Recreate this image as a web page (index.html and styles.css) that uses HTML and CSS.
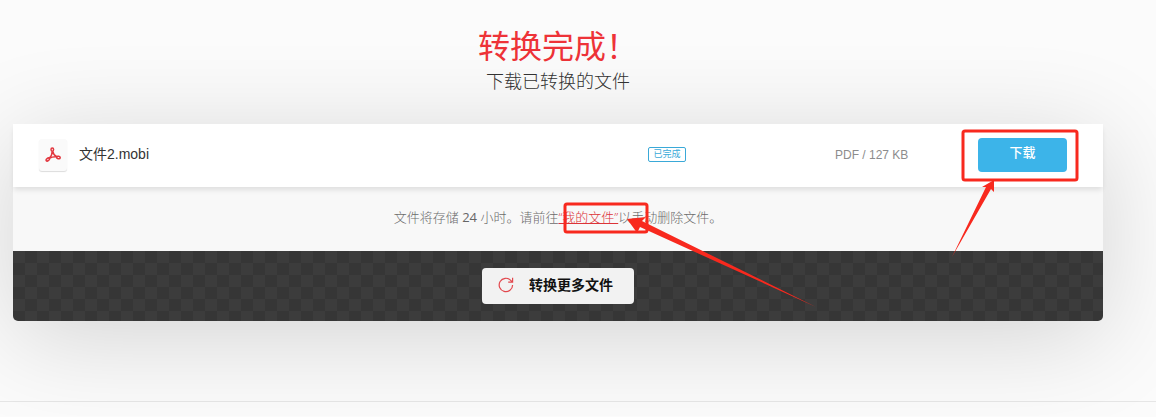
FILE: index.html
```html
<!DOCTYPE html>
<html lang="zh-CN">
<head>
<meta charset="utf-8">
<title>转换完成</title>
<link rel="stylesheet" href="styles.css">
</head>
<body>
<main class="page">
  <header class="heading">
    <h1 class="title">转换完成！</h1>
    <p class="subtitle">下载已转换的文件</p>
  </header>
  <section class="card">
    <div class="file-row">
      <div class="file">
        <span class="file-icon">
          <svg width="16" height="16" viewBox="0 0 16 16" fill="none" stroke="#e2373f" stroke-width="1.5" stroke-linejoin="round" aria-hidden="true">
            <ellipse cx="7.3" cy="2.6" rx="1.3" ry="1.7"/>
            <path d="M7.2 4.3C7.4 6.8 6 9.6 3.9 11.7M7.8 4.3C8.1 6.5 9.6 8.7 12 9.9M4.2 11.3C6.3 10.2 9.2 9.5 12 9.8"/>
            <ellipse cx="2.8" cy="12.5" rx="1.9" ry="1.2" transform="rotate(-38 2.8 12.5)"/>
            <ellipse cx="13.4" cy="10.5" rx="1.8" ry="1.2" transform="rotate(15 13.4 10.5)"/>
          </svg>
        </span>
        <span class="file-name">文件2.mobi</span>
      </div>
      <div class="state"><span class="badge">已完成</span></div>
      <span class="meta">PDF / 127 KB</span>
      <button class="download" type="button">下载</button>
    </div>
    <p class="notice">文件将存储 <span class="hours">24</span> 小时。请前往<a class="files-link" href="#">“我的文件”</a>以手动删除文件。</p>
    <div class="actions">
      <button class="more" type="button">
        <svg width="16" height="16" viewBox="0 0 16 16" fill="none" stroke="#e2474d" stroke-width="1.2" aria-hidden="true">
          <path d="M14.6 8A6.7 6.7 0 1 1 12.7 3.3L14.6 5.2M14.6 .8V5.2H10.2"/>
        </svg>
        转换更多文件
      </button>
    </div>
    <svg class="mark mark-link" width="256" height="106" viewBox="0 0 256 106" aria-hidden="true">
      <rect x="3" y="3" width="82" height="28" rx="2" fill="none" stroke="#f8291e" stroke-width="3"/>
      <path d="M65 18L84 16L80 20L254 106L78 26L75 32L73 29Z" fill="#f8291e"/>
    </svg>
    <svg class="mark mark-download" width="130" height="130" viewBox="0 0 130 130" aria-hidden="true">
      <rect x="12" y="4" width="114" height="49" rx="2" fill="none" stroke="#f8291e" stroke-width="3"/>
      <path d="M43 53L43 65L40 62L1 130L35 60L31 60Z" fill="#f8291e"/>
    </svg>
  </section>
</main>
<footer class="footer"></footer>
</body>
</html>
```
FILE: styles.css
```css
* {
  box-sizing: border-box;
}

body {
  margin: 0;
  background: #fbfbfb;
  color: #333;
  font-family: "Liberation Sans", "Noto Sans CJK SC", sans-serif;
  overflow-x: hidden;
}

.page {
  padding: 26px 53px 80px 13px;
}

.heading {
  padding-bottom: 28px;
  text-align: center;
}

.title {
  margin: 0;
  color: #ee3338;
  font-size: 32px;
  line-height: 42px;
  font-weight: 400;
}

.subtitle {
  margin: 0;
  color: #333;
  font-size: 18px;
  line-height: 28px;
  font-weight: 300;
}

.card {
  position: relative;
  border-radius: 0 0 5px 5px;
  background: #f8f8f8;
  box-shadow: 0 16px 100px rgba(0, 0, 0, 0.16);
}

.file-row {
  position: relative;
  display: grid;
  grid-template-columns: 1fr 187px 143px 89px;
  align-items: center;
  min-height: 63px;
  padding: 0 36px 2px 26px;
  background: #fff;
  box-shadow: 0 4px 5px -1px rgba(0, 0, 0, 0.1);
}

.file {
  display: flex;
  align-items: center;
  gap: 12px;
}

.file-icon {
  display: grid;
  place-items: center;
  width: 28px;
  height: 32px;
  border-radius: 3px;
  background: #fafafa;
  box-shadow: 0 1px 1px rgba(0, 0, 0, 0.14);
}

.file-name {
  padding-bottom: 2px;
  font-size: 14px;
  line-height: 20px;
}

.state {
  display: flex;
}

.badge {
  width: 38px;
  border: 1px solid #3aa9d8;
  border-radius: 2px;
  color: #3aa9d8;
  font-size: 9px;
  line-height: 13px;
  text-align: center;
}

.meta {
  color: #8c8c8c;
  font-size: 12px;
  line-height: 16px;
}

.download {
  height: 34px;
  padding: 0 0 4px;
  border: 0;
  border-radius: 4px;
  background: #3cb4e9;
  color: #fff;
  font: 500 13px/20px "Liberation Sans", "Noto Sans CJK SC", sans-serif;
}

.notice {
  margin: 0;
  padding: 20px 16px 24px;
  color: #6c6c6c;
  font-family: "Open Sans", "Noto Sans CJK SC", sans-serif;
  font-size: 13px;
  line-height: 20px;
  font-weight: 300;
  text-align: center;
}

.hours {
  color: #666;
  font-weight: 400;
}

.files-link {
  color: #dc3438;
}

.actions {
  display: flex;
  justify-content: center;
  padding: 17px;
  border-radius: 0 0 5px 5px;
  background: conic-gradient(#363636 25%, #3c3c3c 0 50%, #363636 0 75%, #3c3c3c 0) 0 0 / 24px 24px;
}

.more {
  display: flex;
  align-items: center;
  gap: 15px;
  height: 36px;
  padding: 0 21px 2px 16px;
  border: 0;
  border-radius: 4px;
  background: #f2f2f2;
  color: #111;
  font: 700 14px/20px "Liberation Sans", "Noto Sans CJK SC", sans-serif;
}

.mark {
  position: absolute;
  pointer-events: none;
}

.mark-link {
  top: 77px;
  left: calc(50% + 4px);
}

.mark-download {
  top: 3px;
  right: 22px;
}

.footer {
  min-height: 15px;
  border-top: 1px solid #e6e6e6;
}
```
